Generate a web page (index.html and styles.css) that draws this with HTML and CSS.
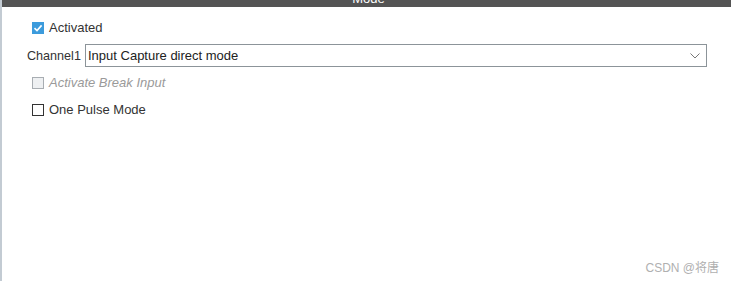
FILE: index.html
```html
<!DOCTYPE html>
<html>
<head>
<meta charset="utf-8">
<link rel="stylesheet" href="styles.css">
</head>
<body>
<div class="panel">
  <div class="titlebar"><span class="title">Mode</span></div>
  <div class="content">
    <div class="row row-activated">
      <span class="cb checked"><svg width="12" height="12" viewBox="0 0 12 12"><path d="M2.5 6.2 L5 8.6 L9.6 3.4" fill="none" stroke="#fff" stroke-width="1.6"/></svg></span>
      <span class="label">Activated</span>
    </div>
    <div class="row row-channel">
      <span class="chlabel">Channel1</span>
      <div class="select">
        <span class="seltext">Input Capture direct mode</span>
        <svg class="chev" width="10" height="6" viewBox="0 0 10 6"><path d="M0.5 0.5 L5 5 L9.5 0.5" fill="none" stroke="#777" stroke-width="1"/></svg>
      </div>
    </div>
    <div class="row row-break">
      <span class="cb disabled"></span>
      <span class="label dis">Activate Break Input</span>
    </div>
    <div class="row row-pulse">
      <span class="cb"></span>
      <span class="label">One Pulse Mode</span>
    </div>
  </div>
  <div class="watermark">CSDN @将唐</div>
</div>
</body>
</html>
```

FILE: styles.css
```css
html, body {
  margin: 0;
  padding: 0;
  background: #fff;
}
body {
  font-family: "Liberation Sans", Arial, sans-serif;
  font-size: 13px;
  color: #333;
}
.panel {
  position: relative;
  width: 729px;
  height: 281px;
  border-left: 2px solid #c3cbd3;
  box-sizing: content-box;
}
.titlebar {
  height: 7px;
  background: #545454;
  overflow: hidden;
  display: flex;
  justify-content: center;
}
.title {
  color: #fff;
  font-size: 13px;
  line-height: 13px;
  margin-top: -8px;
  margin-left: 4px;
}
.content {
  display: flex;
  flex-direction: column;
  padding-left: 30px;
  padding-top: 14px;
}
.row {
  display: flex;
  align-items: center;
}
.row-activated {
  height: 14px;
}
.row-channel {
  margin-top: 9px;
  margin-left: -5px;
  height: 23px;
}
.row-break {
  margin-top: 9px;
  height: 14px;
}
.row-pulse {
  margin-top: 13px;
  height: 14px;
}
.cb {
  width: 12px;
  height: 12px;
  box-sizing: border-box;
  border: 1px solid #333;
  background: #fff;
  display: inline-flex;
  flex: none;
}
.cb.checked {
  background: #3c9bdc;
  border-color: #3c9bdc;
}
.cb.checked svg {
  margin: -1px;
}
.cb.disabled {
  border-color: #a8adb2;
  background: #eef0f2;
}
.label {
  margin-left: 5px;
  color: #333;
  line-height: 14px;
}
.label.dis {
  color: #9a9a9a;
  font-style: italic;
}
.chlabel {
  color: #333;
  width: 58px;
  font-size: 12.6px;
}
.select {
  width: 622px;
  height: 23px;
  box-sizing: border-box;
  border: 1px solid #8c9499;
  display: flex;
  align-items: center;
  justify-content: space-between;
  padding-left: 2px;
  padding-right: 6px;
}
.seltext {
  color: #222;
}
.watermark {
  position: absolute;
  right: 12px;
  bottom: 6px;
  color: #b0b0b0;
  font-family: "Liberation Sans", "Noto Sans CJK SC", sans-serif;
  font-size: 12px;
}
```
